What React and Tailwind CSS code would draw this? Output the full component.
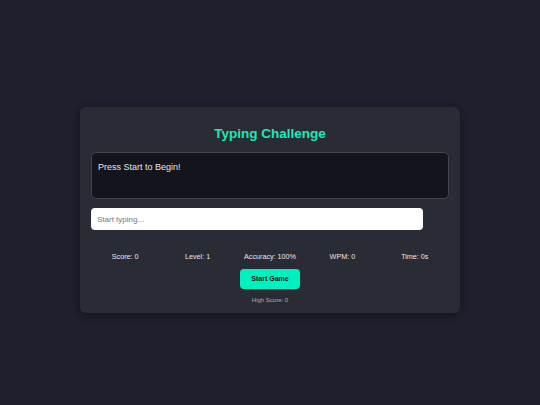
import React from "react";

export default function App() {
  const stats = ["Score: 0", "Level: 1", "Accuracy: 100%", "WPM: 0", "Time: 0s"];
  return (
    <div
      className="w-full h-[405px] bg-[#1f1f2d] flex justify-center"
      style={{ fontFamily: '"Liberation Sans", Arial, sans-serif' }}
    >
      <div className="mt-[107px] w-[380px] h-[206px] bg-[#2a2c35] rounded-[6px] shadow-[0_2px_8px_rgba(0,0,0,0.35)] flex flex-col items-center pt-[17px] px-[11px]">
        <h1 className="text-[13.5px] leading-[20px] font-bold text-[#1de9b6] mb-[8px]">
          Typing Challenge
        </h1>
        <div className="w-full h-[47px] bg-[#14141d] border border-[#43454e] rounded-[5px] px-[6px] pt-[9px] text-[9px] leading-[11px] text-[#e6e6e6] mb-[9px]">
          Press Start to Begin!
        </div>
        <div className="w-full mb-[22px]">
          <input
            className="block w-[332px] h-[22px] bg-white rounded-[4px] px-[6px] text-[8px] text-[#222] placeholder:text-[#777] outline-none"
            placeholder="Start typing..."
          />
        </div>
        <div className="w-[362px] grid grid-cols-5 text-[7.2px] leading-[10px] text-[#e8e8e8] mb-[7px]">
          {stats.map((s) => (
            <div key={s} className="text-center">{s}</div>
          ))}
        </div>
        <button className="w-[60px] h-[20px] bg-[#00f0c0] rounded-[4px] text-[7px] font-bold text-[#111] mb-[6px]">
          Start Game
        </button>
        <div className="text-[6px] leading-[10px] text-[#b0b0b0]">High Score: 0</div>
      </div>
    </div>
  );
}
